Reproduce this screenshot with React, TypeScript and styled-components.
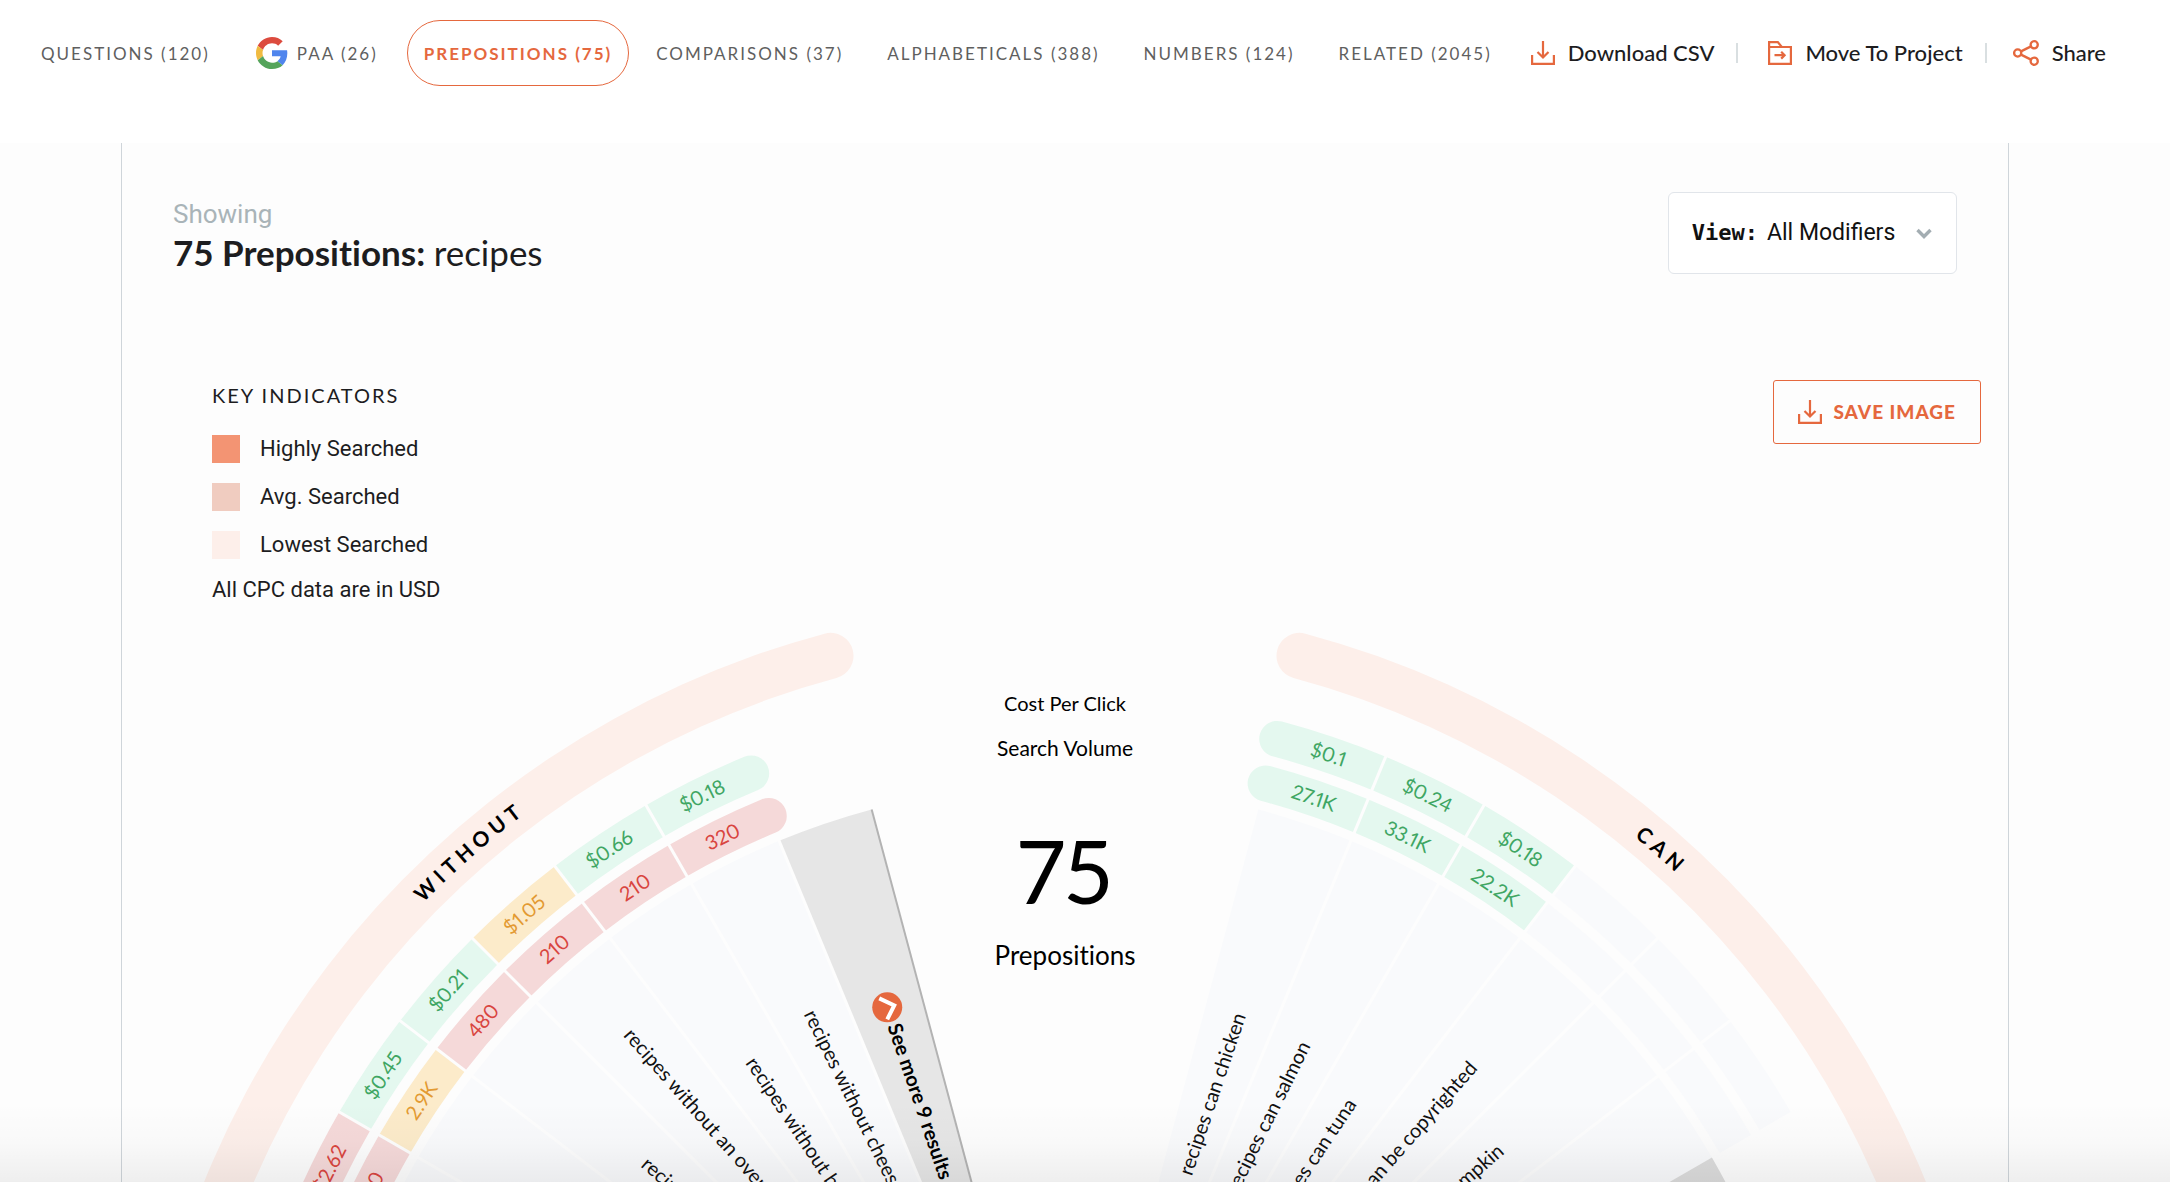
import React from 'react';
import styled, { createGlobalStyle, css } from 'styled-components';

const orange = '#e5683e';

const GlobalStyle = createGlobalStyle`
  * { box-sizing: border-box; }
  body {
    margin: 0;
    background: #fdfdfd;
    color: #1d1d1f;
    font-family: Lato, "Open Sans", sans-serif;
    font-variant-ligatures: none;
  }
`;

const Page = styled.div`
  position: relative;
  display: flex;
  flex-direction: column;
  height: 100vh;
  overflow: hidden;
`;

const BottomFade = styled.div`
  position: absolute;
  right: 0;
  bottom: 0;
  left: 0;
  height: 80px;
  background: linear-gradient(to bottom, rgba(0, 0, 0, 0), rgba(0, 0, 0, 0.015) 50%, rgba(0, 0, 0, 0.06));
  pointer-events: none;
`;

const Header = styled.header`
  display: flex;
  flex: none;
  align-items: flex-start;
  justify-content: space-between;
  height: 143px;
  padding: 20px 64px 0 24px;
  background: #fff;
  white-space: nowrap;
`;

const Tabs = styled.nav`
  display: flex;
  align-items: center;
  gap: 10px;
`;

const Tab = styled.a<{ $active?: boolean; $wide?: boolean }>`
  display: flex;
  align-items: center;
  gap: 9px;
  height: 66px;
  padding: 0 ${(p) => (p.$wide ? 18 : 16)}px;
  border: 1px solid transparent;
  border-radius: 33px;
  color: #5f5f5f;
  font-size: 17px;
  letter-spacing: 2px;
  text-decoration: none;
  text-transform: uppercase;
  ${(p) => p.$active && css`
    border-color: ${orange};
    color: ${orange};
    font-weight: 700;
  `}
`;

const Actions = styled.div`
  display: flex;
  align-items: center;
  height: 66px;
`;

const Action = styled.button`
  display: flex;
  align-items: center;
  gap: 13px;
  height: 20px;
  padding: 0 22px 0 30px;
  border: 0;
  border-left: 2px solid #d9dfe1;
  background: none;
  color: #1d1d1f;
  font: 500 22px/20px Lato, sans-serif;
  &:first-child { padding-left: 0; border-left: 0; }
  &:last-child { padding-right: 0; padding-left: 26px; }
`;

const Panel = styled.main`
  flex: 1;
  min-height: 0;
  margin: 0 161px 0 121px;
  border: solid #cfd5da;
  border-width: 0 1px;
`;

const TitleRow = styled.div`
  display: flex;
  align-items: flex-start;
  justify-content: space-between;
  padding: 49px 51px 0;
`;

const Showing = styled.div`
  margin-top: 6px;
  color: #a9b4b8;
  font: 26px/32px Roboto, sans-serif;
`;

const Title = styled.h1`
  margin: 0;
  font-size: 35px;
  font-weight: 700;
  line-height: 44px;
`;

const Keyword = styled.span`
  font-weight: 400;
`;

const Filter = styled.label`
  display: flex;
  align-items: center;
  gap: 9px;
  height: 82px;
  padding: 0 24px 0 23px;
  border: 1px solid #e1e5ea;
  border-radius: 6px;
  background: #fff;
  color: #111;
`;

const FilterName = styled.span`
  font: 700 22px/30px "DejaVu Sans Mono", monospace;
`;

const FilterSelect = styled.select`
  width: 140px;
  padding: 0;
  border: 0;
  appearance: none;
  background: none;
  color: inherit;
  font: 23px/30px Roboto, sans-serif;
`;

const KeyRow = styled.div`
  display: flex;
  align-items: flex-start;
  justify-content: space-between;
  padding: 106px 27px 0 90px;
`;

const Legend = styled.section`
  display: flex;
  flex-direction: column;
  height: 219px;
  font: 22px/28px Roboto, sans-serif;
`;

const LegendTitle = styled.h2`
  margin: 0 0 15px;
  font: 400 20px/30px Lato, sans-serif;
  letter-spacing: 2px;
  text-transform: uppercase;
`;

const LegendItem = styled.div`
  display: flex;
  flex: none;
  align-items: center;
  gap: 20px;
  height: 48px;
`;

const LegendNote = styled.p`
  margin: 7px 0 0;
`;

const Swatch = styled.span<{ $color: string }>`
  width: 28px;
  height: 28px;
  background: ${(p) => p.$color};
`;

const SaveButton = styled.button`
  display: flex;
  align-items: center;
  gap: 11px;
  height: 64px;
  padding: 0 24px;
  border: 1px solid ${orange};
  border-radius: 3px;
  background: transparent;
  color: ${orange};
  font: 900 19px/24px Lato, sans-serif;
  letter-spacing: 1px;
  text-transform: uppercase;
`;

const Wheel = styled.svg`
  display: block;
  width: 100%;
  font-family: Lato, sans-serif;
  font-variant-numeric: proportional-nums;
`;

const tabs = [
  { label: 'Questions (120)' },
  { label: 'PAA (26)', google: true },
  { label: 'Prepositions (75)', active: true },
  { label: 'Comparisons (37)' },
  { label: 'Alphabeticals (388)' },
  { label: 'Numbers (124)' },
  { label: 'Related (2045)' },
];

const GoogleLogo = () => (
  <svg width="32" height="32" viewBox="0 0 48 48" aria-hidden="true">
    <path fill="#dc4b3e" d="M24 9.5c3.54 0 6.71 1.22 9.21 3.6l6.85-6.85C35.9 2.38 30.47 0 24 0 14.62 0 6.51 5.38 2.56 13.22l7.98 6.19C12.43 13.72 17.74 9.5 24 9.5z" />
    <path fill="#5085ed" d="M46.98 24.55c0-1.57-.15-3.09-.38-4.55H24v9.02h12.94c-.58 2.96-2.26 5.48-4.78 7.18l7.73 6c4.51-4.18 7.09-10.36 7.09-17.65z" />
    <path fill="#f0bb41" d="M10.53 28.59c-.48-1.45-.76-2.99-.76-4.59s.27-3.14.76-4.59l-7.98-6.19C.92 16.46 0 20.12 0 24c0 3.88.92 7.54 2.56 10.78l7.97-6.19z" />
    <path fill="#55a45b" d="M24 48c6.48 0 11.93-2.13 15.89-5.81l-7.73-6c-2.15 1.45-4.92 2.3-8.16 2.3-6.26 0-11.57-4.22-13.47-9.91l-7.98 6.19C6.51 42.62 14.62 48 24 48z" />
  </svg>
);

const DownloadIcon = () => (
  <svg width="24" height="24" viewBox="0 0 24 24" fill="none" stroke={orange} strokeWidth="2.2" aria-hidden="true">
    <path d="M12 0v16M6.5 11l5.5 5.5 5.5-5.5M1.1 14v8.9h21.8V14" />
  </svg>
);

const FolderIcon = () => (
  <svg width="24" height="24" viewBox="0 0 24 24" fill="none" stroke={orange} strokeWidth="2.2" aria-hidden="true">
    <path d="M1.1 22.9V1.1h8.7l4 4.9h9.1v16.9zM1.1 6h12.7M6.5 14.2h10M13.2 10.8l3.4 3.4-3.4 3.4" />
  </svg>
);

const ShareIcon = () => (
  <svg width="26" height="26" viewBox="0 0 26 26" fill="none" stroke={orange} strokeWidth="2.3" aria-hidden="true">
    <circle cx="4.7" cy="13" r="3.6" />
    <circle cx="21.2" cy="4.8" r="3.6" />
    <circle cx="21.2" cy="21.2" r="3.6" />
    <path d="M8 11.4l10-5M8 14.6l10 5" />
  </svg>
);

const Chevron = () => (
  <svg width="16" height="12" viewBox="0 0 16 12" fill="none" stroke="#a3adb2" strokeWidth="3.4" aria-hidden="true">
    <path d="M1.5 3L8 9.5 14.5 3" />
  </svg>
);

type Tone = 'low' | 'mid' | 'high' | 'none';
const fills: Record<Tone, string> = { low: '#e4f8ef', mid: '#fcebca', high: '#f5d9d9', none: '#f9fafc' };
const inks: Record<Tone, string> = { low: '#3fa663', mid: '#e39a32', high: '#d9453f', none: 'transparent' };

const STEP = 7.5;

// Angles are degrees clockwise from twelve o'clock.
const point = (r: number, deg: number) => {
  const a = (deg * Math.PI) / 180;
  return `${(r * Math.sin(a)).toFixed(2)} ${(-r * Math.cos(a)).toFixed(2)}`;
};

type Cap = 'start' | 'end' | undefined;

const band = (inner: number, outer: number, from: number, to: number, cap?: Cap) => {
  const rc = (outer - inner) / 2;
  const right = cap === 'end' ? `A${rc} ${rc} 0 0 1 ${point(inner, to)}` : `L${point(inner, to)}`;
  const left = cap === 'start' ? `A${rc} ${rc} 0 0 1 ${point(outer, from)}` : '';
  return `M${point(outer, from)}A${outer} ${outer} 0 0 1 ${point(outer, to)}${right}A${inner} ${inner} 0 0 0 ${point(inner, from)}${left}Z`;
};

interface Spoke {
  from: number;
  text: string;
  end: number;
  cpc?: string;
  cpcTone: Tone;
  volume?: string;
  volumeTone: Tone;
  cap?: Cap;
}

const spokes: Spoke[] = [
  { from: 15, text: 'recipes can chicken', end: 546, cpc: '$0.1', cpcTone: 'low', volume: '27.1K', volumeTone: 'low', cap: 'start' },
  { from: 22.5, text: 'recipes can salmon', end: 544, cpc: '$0.24', cpcTone: 'low', volume: '33.1K', volumeTone: 'low' },
  { from: 30, text: 'recipes can tuna', end: 517, cpc: '$0.18', cpcTone: 'low', volume: '22.2K', volumeTone: 'low' },
  { from: 37.5, text: 'recipes can be copyrighted', end: 620, cpcTone: 'none', volumeTone: 'none' },
  { from: 45, text: 'recipes can pumpkin', end: 580, cpcTone: 'none', volumeTone: 'none' },
  { from: 52.5, text: '', end: 500, cpcTone: 'none', volumeTone: 'none' },
  { from: -30, text: 'recipes without cheese', end: 579, cpc: '$0.18', cpcTone: 'low', volume: '320', volumeTone: 'high', cap: 'end' },
  { from: -37.5, text: 'recipes without butter', end: 567, cpc: '$0.66', cpcTone: 'low', volume: '210', volumeTone: 'high' },
  { from: -45, text: 'recipes without an oven', end: 664, cpc: '$1.05', cpcTone: 'mid', volume: '210', volumeTone: 'high' },
  { from: -52.5, text: 'recipes without', end: 560, cpc: '$0.21', cpcTone: 'low', volume: '480', volumeTone: 'high' },
  { from: -60, text: '', end: 500, cpc: '$0.45', cpcTone: 'low', volume: '2.9K', volumeTone: 'mid' },
  { from: -67.5, text: '', end: 500, cpc: '$2.62', cpcTone: 'high', volume: '590', volumeTone: 'high' },
];

const dividers = [-60, -52.5, -45, -37.5, -30, 22.5, 30, 37.5, 45, 52.5];

const radial = (mid: number, r: number) => `rotate(${mid}) translate(0 ${-r}) rotate(${mid > 0 ? -90 : 90})`;

const SpokeGroup = ({ s }: { s: Spoke }) => {
  const mid = s.from + STEP / 2;
  return (
    <g>
      <path d={band(1, 747, s.from, s.from + STEP)} fill={fills.none} />
      <path d={band(802, 838, s.from, s.from + STEP, s.cap)} fill={fills[s.cpcTone]} />
      <path d={band(756, 792, s.from, s.from + STEP, s.cap)} fill={fills[s.volumeTone]} />
      {s.cpc && <text transform={`rotate(${mid})`} y="-813" fontSize="20" textAnchor="middle" fill={inks[s.cpcTone]}>{s.cpc}</text>}
      {s.volume && <text transform={`rotate(${mid})`} y="-767" fontSize="20" textAnchor="middle" fill={inks[s.volumeTone]}>{s.volume}</text>}
    </g>
  );
};

const SpokeLabel = ({ s }: { s: Spoke }) => {
  const mid = s.from + STEP / 2;
  return (
    <text transform={radial(mid, s.end)} y="6" fontSize="20" textAnchor={mid > 0 ? 'end' : 'start'} fill="#111">
      {s.text}
    </text>
  );
};

const PrepositionWheel = () => (
  <Wheel viewBox="-943 -932 1886 1100" role="img" aria-label="75 prepositions for recipes">
    <defs>
      <path id="arc-left" d={`M${point(898, -67.5)}A898 898 0 0 1 ${point(898, -15)}`} />
      <path id="arc-right" d={`M${point(898, 15)}A898 898 0 0 1 ${point(898, 67.5)}`} />
    </defs>
    <path d={band(883, 929, -90, -15, 'end')} fill="#fdefea" />
    <path d={band(883, 929, 15, 90, 'start')} fill="#fdefea" />
    <g fill="#000" fontSize="21" fontWeight="700" letterSpacing="5" textAnchor="middle">
      <text><textPath href="#arc-left" startOffset="50%">WITHOUT</textPath></text>
      <text><textPath href="#arc-right" startOffset="50%">CAN</textPath></text>
    </g>
    {spokes.map((s) => <SpokeGroup key={s.from} s={s} />)}
    <path d={band(1, 747, -22.5, -15)} fill="#e6e6e6" />
    <path d={band(1, 747, 60, 67.5)} fill="#dcdcdc" />
    <g stroke="#fdfdfd" strokeWidth="3">
      {dividers.map((a) => <path key={a} d={`M0 0L${point(840, a)}`} />)}
      <path d={`M0 0L${point(749, -22.5)}`} />
    </g>
    <path d={`M0 0L${point(747, -15)}`} stroke="#b3b3b3" strokeWidth="2" />
    {spokes.filter((s) => s.text).map((s) => <SpokeLabel key={s.from} s={s} />)}
    <g transform={radial(-18.75, 553)}>
      <g transform="rotate(-71.25)">
        <circle r="15" fill={orange} />
        <path d="M-8-9L7-2L0 12" fill="none" stroke="#fff" strokeWidth="4" />
      </g>
      <text x="18" y="6" fontSize="20" fontWeight="700" fill="#000">See more 9 results</text>
    </g>
    <g fill="#000" textAnchor="middle">
      <text y="-820" fontSize="20">Cost Per Click</text>
      <text y="-775" fontSize="21">Search Volume</text>
      <text y="-627" fontSize="88">75</text>
      <text y="-566" fontSize="26">Prepositions</text>
    </g>
  </Wheel>
);

export default function App() {
  return (
    <Page>
      <GlobalStyle />
      <Header>
        <Tabs>
          {tabs.map((t) => (
            <Tab key={t.label} href="#" $active={t.active} $wide={t.google}>
              {t.google && <GoogleLogo />}
              {t.label}
            </Tab>
          ))}
        </Tabs>
        <Actions>
          <Action type="button"><DownloadIcon />Download CSV</Action>
          <Action type="button"><FolderIcon />Move To Project</Action>
          <Action type="button"><ShareIcon />Share</Action>
        </Actions>
      </Header>
      <Panel>
        <TitleRow>
          <div>
            <Showing>Showing</Showing>
            <Title>75 Prepositions: <Keyword>recipes</Keyword></Title>
          </div>
          <Filter>
            <FilterName>View:</FilterName>
            <FilterSelect defaultValue="All Modifiers">
              <option>All Modifiers</option>
            </FilterSelect>
            <Chevron />
          </Filter>
        </TitleRow>
        <KeyRow>
          <Legend>
            <LegendTitle>Key indicators</LegendTitle>
            <LegendItem><Swatch $color="#f39473" />Highly Searched</LegendItem>
            <LegendItem><Swatch $color="#f0ccc0" />Avg. Searched</LegendItem>
            <LegendItem><Swatch $color="#fdefea" />Lowest Searched</LegendItem>
            <LegendNote>All CPC data are in USD</LegendNote>
          </Legend>
          <SaveButton type="button"><DownloadIcon />Save image</SaveButton>
        </KeyRow>
        <PrepositionWheel />
      </Panel>
      <BottomFade />
    </Page>
  );
}
